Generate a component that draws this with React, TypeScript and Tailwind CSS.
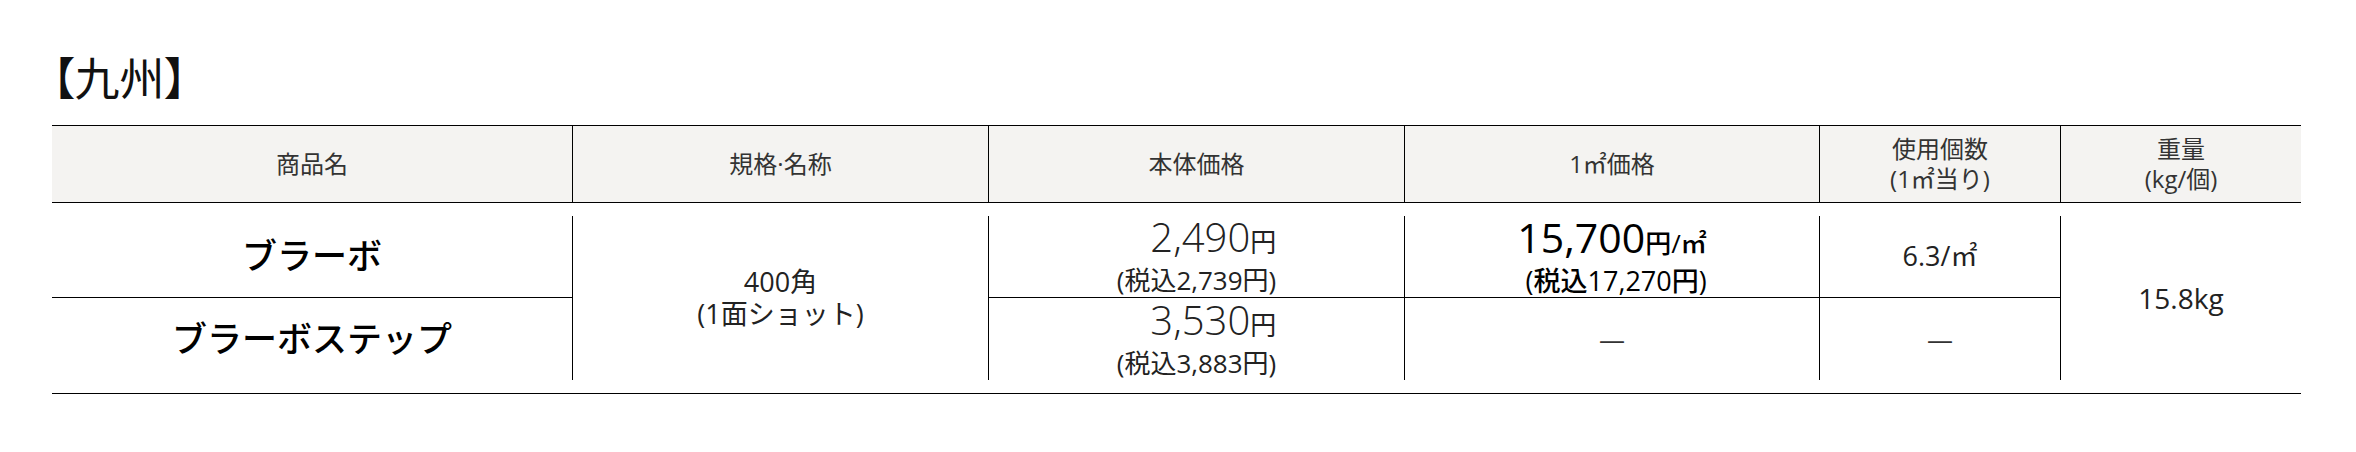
import * as React from "react";

const cols = "grid grid-cols-[520px_416px_416px_415px_241px_241px]";

const HeadCell = ({ children, first }: { children: React.ReactNode; first?: boolean }) => (
  <div className={`flex items-center justify-center text-center text-[24px] leading-[30px] text-[#333] ${first ? "" : "border-l border-black"}`}>
    <div>{children}</div>
  </div>
);

const Price = ({ main, tax }: { main: string; tax: string }) => (
  <div className="inline-block text-right text-[#222]">
    <div className="leading-[38px]">
      <span className="text-[40px] font-light">{main}</span>
      <span className="text-[26px]">円</span>
    </div>
    <div className="text-[26px] leading-[30px]">(税込{tax}円)</div>
  </div>
);

export default function App() {
  return (
    <div className="w-[2356px] h-[452px] bg-white font-['Open_Sans','Noto_Sans_CJK_JP',sans-serif] text-[#222]">
      <div className="pl-[52px] pt-[56px]">
        <h2 className="text-[45px] leading-[45px] text-[#111] [font-feature-settings:'palt']">【九州】</h2>

        <div className="mt-[24px] w-[2249px]">
          {/* header */}
          <div className={`${cols} h-[78px] border-y border-black bg-[#f4f3f1]`}>
            <HeadCell first>商品名</HeadCell>
            <HeadCell>規格·名称</HeadCell>
            <HeadCell>本体価格</HeadCell>
            <HeadCell>1㎡価格</HeadCell>
            <HeadCell>
              使用個数
              <br />
              (1㎡当り)
            </HeadCell>
            <HeadCell>
              重量
              <br />
              (kg/個)
            </HeadCell>
          </div>

          {/* body */}
          <div className="py-[13px] border-b border-black">
            <div className={`${cols} grid-rows-[82px_82px]`}>
              <div className="flex items-center justify-center border-b border-black text-[35px] font-medium text-black">
                ブラーボ
              </div>
              <div className="row-span-2 flex items-center justify-center border-l border-black text-center text-[27px] leading-[32px]">
                <div>
                  400角
                  <br />
                  (1面ショット)
                </div>
              </div>
              <div className="flex items-center justify-center border-l border-b border-black">
                <Price main="2,490" tax="2,739" />
              </div>
              <div className="flex items-center justify-center border-l border-b border-black">
                <div className="inline-block text-right text-black font-medium">
                  <div className="leading-[38px]">
                    <span className="text-[41px]">15,700</span>
                    <span className="text-[26px]">円/㎡</span>
                  </div>
                  <div className="text-[27px] leading-[30px]">(税込17,270円)</div>
                </div>
              </div>
              <div className="flex items-center justify-center border-l border-b border-black text-[27px]">
                6.3/㎡
              </div>
              <div className="row-span-2 flex items-center justify-center border-l border-black text-[28px]">
                15.8kg
              </div>

              <div className="flex items-center justify-center text-[35px] font-medium text-black">
                ブラーボステップ
              </div>
              <div className="flex items-center justify-center border-l border-black">
                <Price main="3,530" tax="3,883" />
              </div>
              <div className="flex items-center justify-center border-l border-black text-[26px] text-[#333]">
                —
              </div>
              <div className="flex items-center justify-center border-l border-black text-[26px] text-[#333]">
                —
              </div>
            </div>
          </div>
        </div>
      </div>
    </div>
  );
}
